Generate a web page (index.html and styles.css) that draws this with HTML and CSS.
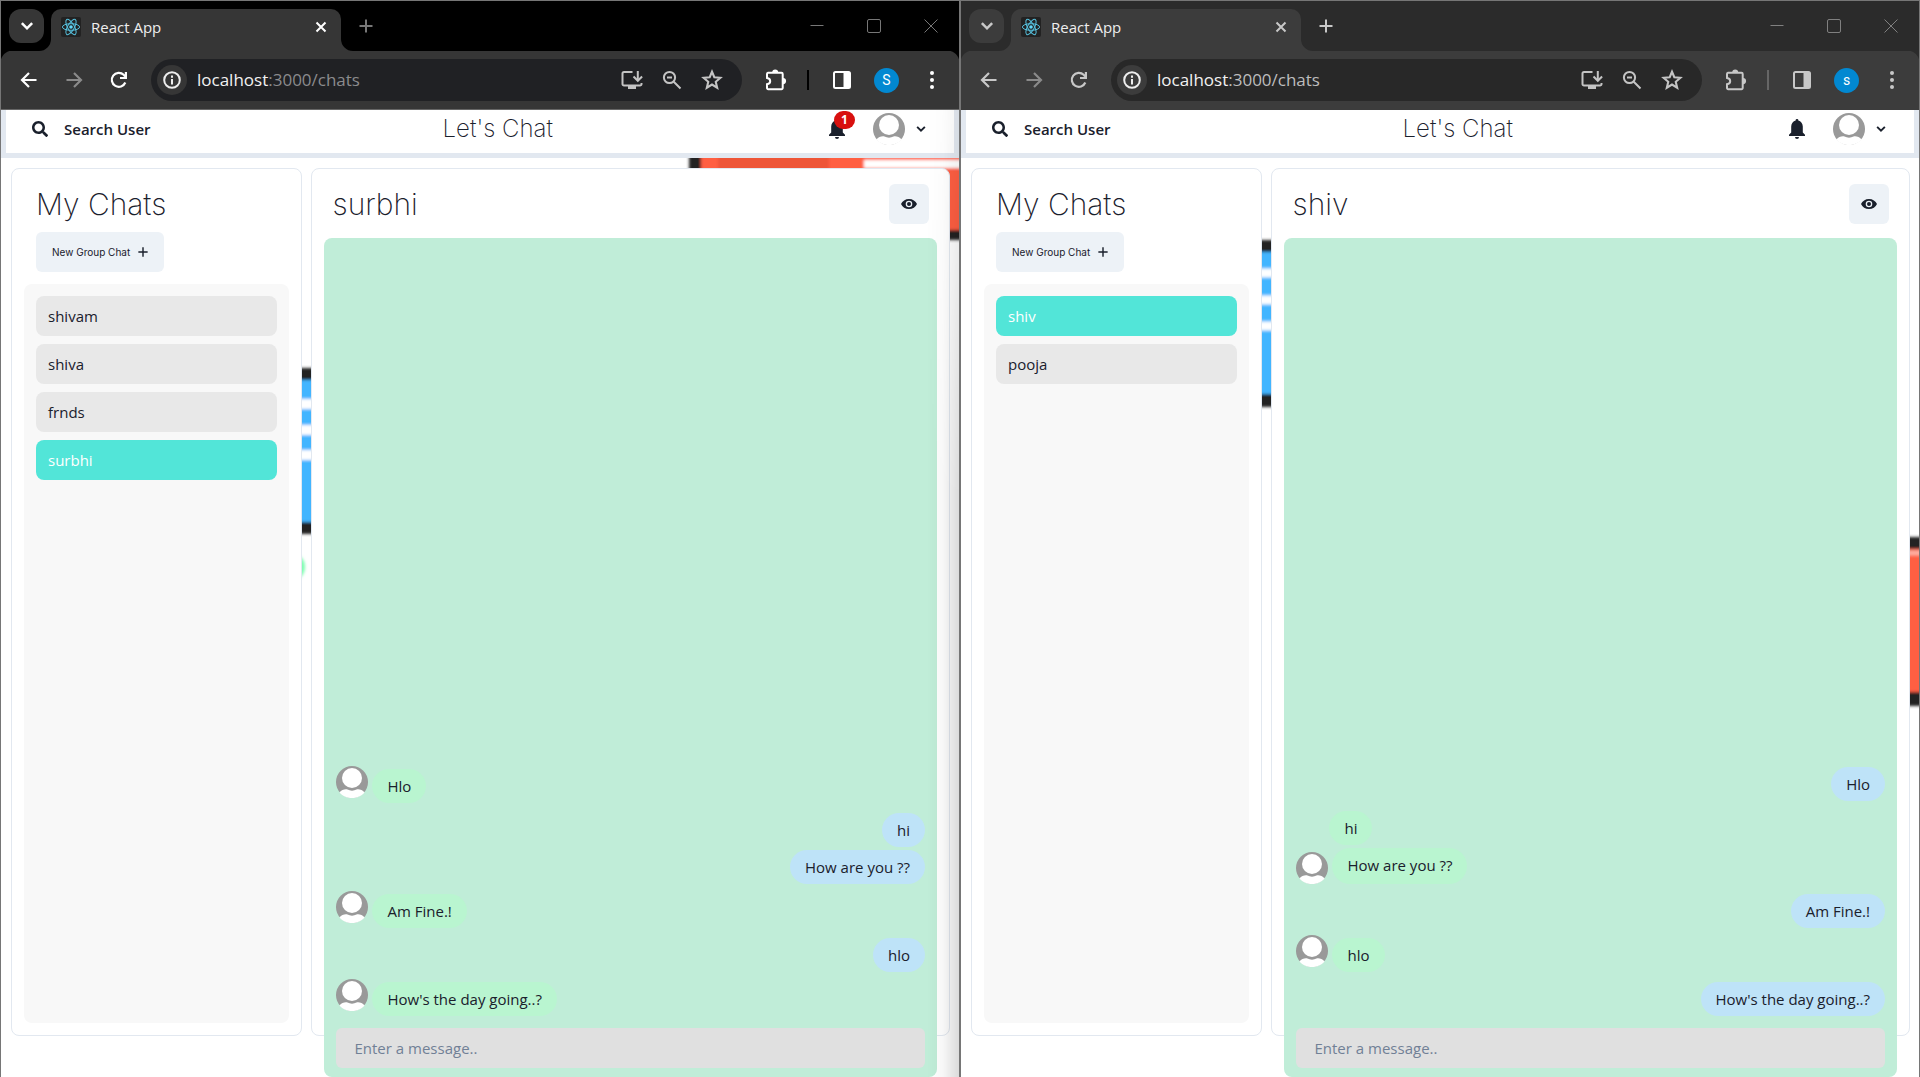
FILE: index.html
```html
<!DOCTYPE html>
<html lang="en">
<head>
<meta charset="utf-8">
<title>Let's Chat</title>
<meta name="viewport" content="width=device-width, initial-scale=1">
<link rel="stylesheet" href="styles.css">
</head>
<body>
<svg class="sprite" width="0" height="0" aria-hidden="true">
  <symbol id="i-react" viewBox="0 0 20 20"><rect width="20" height="20" rx="2" fill="#222"/><g fill="none" stroke="#56c1de" stroke-width="1"><ellipse cx="10" cy="10" rx="8.6" ry="3.3"/><ellipse cx="10" cy="10" rx="8.6" ry="3.3" transform="rotate(60 10 10)"/><ellipse cx="10" cy="10" rx="8.6" ry="3.3" transform="rotate(120 10 10)"/></g><circle cx="10" cy="10" r="1.8" fill="#61dafb"/></symbol>
  <symbol id="i-down" viewBox="0 0 14 14"><path d="M2.5 4.5 7 9l4.500-4.500" fill="none" stroke="currentColor" stroke-width="2.200"/></symbol>
  <symbol id="i-x" viewBox="0 0 14 14"><path d="m2.500 2.500 9 9m0-9-9 9" fill="none" stroke="currentColor" stroke-width="2"/></symbol>
  <symbol id="i-plus" viewBox="0 0 14 14"><path d="M7 .5v13M.5 7h13" fill="none" stroke="currentColor" stroke-width="2"/></symbol>
  <symbol id="i-min" viewBox="0 0 14 14"><path d="M.5 6.500h13" fill="none" stroke="currentColor"/></symbol>
  <symbol id="i-max" viewBox="0 0 14 14"><rect x=".5" y=".5" width="13" height="13" rx="1.500" fill="none" stroke="currentColor"/></symbol>
  <symbol id="i-close" viewBox="0 0 14 14"><path d="m.5.5 13 13m0-13-13 13" fill="none" stroke="currentColor"/></symbol>
  <symbol id="i-back" viewBox="0 0 20 20"><path d="M17.500 10H3.500M10 3l-7 7 7 7" fill="none" stroke="currentColor" stroke-width="2.200"/></symbol>
  <symbol id="i-fwd" viewBox="0 0 20 20"><path d="M2.500 10h14M10 3l7 7-7 7" fill="none" stroke="currentColor" stroke-width="2.200"/></symbol>
  <symbol id="i-reload" viewBox="0 0 20 20"><path d="M16.300 12.500a7 7 0 1 1-1.600-7.700l1.500 1.600" fill="none" stroke="currentColor" stroke-width="2.200"/><path d="M18 2v7h-7V7h4.800V2z" fill="currentColor"/></symbol>
  <symbol id="i-info" viewBox="0 0 20 20"><circle cx="10" cy="10" r="7.800" fill="none" stroke="currentColor" stroke-width="2"/><path d="M9 9h2v5.500H9zM9 5.500h2v2.200H9z" fill="currentColor"/></symbol>
  <symbol id="i-install" viewBox="0 0 22 20"><path d="M11.500 2H3a1.500 1.500 0 0 0-1.500 1.500V14A1.500 1.500 0 0 0 3 15.500h16a1.500 1.500 0 0 0 1.500-1.500v-1" fill="none" stroke="currentColor" stroke-width="2"/><path d="M7 15h8v4H7zM15.800 1h2v9h-2z" fill="currentColor"/><path d="m12.500 6.500 4.300 4.300 4.300-4.300" fill="none" stroke="currentColor" stroke-width="2"/></symbol>
  <symbol id="i-zoomout" viewBox="0 0 20 20"><circle cx="7.500" cy="7.500" r="5.600" fill="none" stroke="currentColor" stroke-width="2"/><path d="M5 7.500h5M11.500 11.500l7 7" fill="none" stroke="currentColor" stroke-width="2"/></symbol>
  <symbol id="i-star" viewBox="0 0 20 20"><path d="m10 2.500 2.100 5 5.500.5-4.200 3.600 1.300 5.400-4.700-2.900L5.300 17l1.300-5.400L2.400 8l5.500-.5z" fill="none" stroke="currentColor" stroke-width="1.900"/></symbol>
  <symbol id="i-puzzle" viewBox="0 0 22 22"><path d="M3 3.800h13.500a1.200 1.200 0 0 1 1.200 1.200v14a1.200 1.200 0 0 1-1.200 1.200H3.200A1.200 1.200 0 0 1 2 19v-3.800c2.200-.3 3.200-1.300 3.200-3S4.200 9.300 2 9V5a1.200 1.200 0 0 1 1-1.200z" fill="none" stroke="currentColor" stroke-width="2"/><path d="M7.200 3.500a3 3 0 0 1 6 0zM18 9a3 3 0 0 1 0 6.200z" fill="currentColor"/></symbol>
  <symbol id="i-panel" viewBox="0 0 20 20"><rect x="2" y="2" width="16" height="16" rx="1.500" fill="none" stroke="currentColor" stroke-width="2"/><path d="M11.500 2H18v16h-6.500z" fill="currentColor"/></symbol>
  <symbol id="i-dots" viewBox="0 0 20 20"><g fill="currentColor"><circle cx="10" cy="3" r="2"/><circle cx="10" cy="10" r="2"/><circle cx="10" cy="17" r="2"/></g></symbol>
  <symbol id="i-search" viewBox="0 0 512 512"><path fill="currentColor" d="M505 442.700L405.300 343c-4.500-4.500-10.600-7-17-7H372c27.600-35.300 44-79.700 44-128C416 93.100 322.900 0 208 0S0 93.100 0 208s93.100 208 208 208c48.300 0 92.700-16.400 128-44v16.300c0 6.400 2.500 12.500 7 17l99.700 99.700c9.400 9.400 24.600 9.400 33.900 0l28.300-28.300c9.400-9.400 9.400-24.600.1-34zM208 336c-70.700 0-128-57.200-128-128 0-70.700 57.200-128 128-128 70.700 0 128 57.200 128 128 0 70.700-57.200 128-128 128z"/></symbol>
  <symbol id="i-bell" viewBox="0 0 16 20"><path fill="currentColor" d="M8 0a1.300 1.300 0 0 1 1.300 1.500C12 2.200 13.800 4.500 13.800 7.500v6L16 15.800V17H0v-1.200l2.200-2.300v-6c0-3 1.800-5.300 4.500-6A1.300 1.300 0 0 1 8 0zM6 18h4a2 2 0 0 1-4 0z"/></symbol>
  <symbol id="i-eye" viewBox="0 0 16 12"><path fill="currentColor" fill-rule="evenodd" d="M8 1C4.400 1 1.300 3 0 6c1.300 3 4.400 5 8 5s6.700-2 8-5c-1.300-3-4.400-5-8-5zm0 8.300A3.300 3.300 0 1 1 8 2.700a3.300 3.300 0 0 1 0 6.600zM8 4a2 2 0 1 0 0 4 2 2 0 0 0 0-4z"/></symbol>
  <symbol id="i-user" viewBox="0 0 32 32"><circle cx="16" cy="16" r="16" fill="#999"/><circle cx="16" cy="12" r="10" fill="#fff"/><path d="M3.500 26.500c2-2.500 5.500-3.700 8-3 2.500 1.500 6.500 1.500 9 0 2.500-.7 6 .5 8 3-2.500 3.500-7.500 5.500-12.500 5.500s-10-2-12.500-5.500z" fill="#fff"/></symbol>
  <symbol id="i-flare" viewBox="0 0 12 12"><path d="M12 0v12H0A12 12 0 0 0 12 0z" fill="currentColor"/></symbol>
</svg>

<div class="desktop">
  <section class="window window-active">
    <div class="tabstrip">
      <button class="tab-search" aria-label="Search tabs"><svg width="16" height="16"><use href="#i-down"/></svg></button>
      <div class="tab">
        <svg class="flare flare-left" width="12" height="12"><use href="#i-flare"/></svg>
        <svg width="20" height="20"><use href="#i-react"/></svg>
        <span class="tab-title">React App</span>
        <button class="tab-close" aria-label="Close tab"><svg width="14" height="14"><use href="#i-x"/></svg></button>
        <svg class="flare flare-right" width="12" height="12"><use href="#i-flare"/></svg>
      </div>
      <button class="tab-new" aria-label="New tab"><svg width="14" height="14"><use href="#i-plus"/></svg></button>
      <div class="controls">
        <button aria-label="Minimize"><svg width="14" height="14"><use href="#i-min"/></svg></button>
        <button aria-label="Maximize"><svg width="14" height="14"><use href="#i-max"/></svg></button>
        <button aria-label="Close"><svg width="14" height="14"><use href="#i-close"/></svg></button>
      </div>
    </div>
    <div class="toolbar">
      <button aria-label="Back"><svg width="20" height="20"><use href="#i-back"/></svg></button>
      <button class="dim" aria-label="Forward"><svg width="20" height="20"><use href="#i-fwd"/></svg></button>
      <button aria-label="Reload"><svg width="20" height="20"><use href="#i-reload"/></svg></button>
      <div class="omnibox">
        <button class="site-info" aria-label="Site information"><svg width="20" height="20"><use href="#i-info"/></svg></button>
        <span class="url">localhost<span class="path">:3000/chats</span></span>
        <button aria-label="Install"><svg width="22" height="20"><use href="#i-install"/></svg></button>
        <button aria-label="Zoom"><svg width="20" height="20"><use href="#i-zoomout"/></svg></button>
        <button aria-label="Bookmark"><svg width="22" height="22"><use href="#i-star"/></svg></button>
      </div>
      <button aria-label="Extensions"><svg width="22" height="22"><use href="#i-puzzle"/></svg></button>
      <span class="divider"></span>
      <button aria-label="Side panel"><svg width="20" height="20"><use href="#i-panel"/></svg></button>
      <button aria-label="Profile"><span class="profile">S</span></button>
      <button aria-label="Menu"><svg width="20" height="20"><use href="#i-dots"/></svg></button>
    </div>
    <div class="app">
      <header class="header">
        <button class="search"><svg width="16" height="16"><use href="#i-search"/></svg>Search User</button>
        <h1>Let's Chat</h1>
        <div class="account">
          <button class="bell" aria-label="Notifications"><svg width="16" height="20"><use href="#i-bell"/></svg><span class="badge">1</span></button>
          <button class="me" aria-label="Account"><svg width="32" height="32"><use href="#i-user"/></svg><svg width="12" height="12"><use href="#i-down"/></svg></button>
        </div>
      </header>
      <main class="main">
        <svg class="art" viewBox="0 0 958 919" width="958" height="919" aria-hidden="true">
          <defs><filter id="soft"><feGaussianBlur stdDeviation="1.5"/></filter></defs>
          <g filter="url(#soft)">
            <rect x="688" y="-30" width="300" height="112" fill="#222"/>
            <rect x="700" y="-20" width="288" height="92" fill="#ff5f43"/>
            <rect x="717" y="-20" width="111" height="60" fill="#ee5439"/>
            <rect x="863" y="2" width="120" height="8" fill="#fff"/>
            <rect x="230" y="210" width="120" height="166" fill="#222"/>
            <rect x="240" y="222" width="100" height="142" fill="#43b5ff"/>
            <path d="M240 246h100M240 272h100M240 297h100" stroke="#fff" stroke-width="10"/>
            <circle cx="290" cy="409" r="14" fill="#7dfdb0"/>
          </g>
        </svg>
        <section class="panel chats">
          <h2>My Chats</h2>
          <button class="group">New Group Chat<svg width="10" height="10"><use href="#i-plus"/></svg></button>
          <div class="list">
            <button class="chat">shivam</button>
            <button class="chat">shiva</button>
            <button class="chat">frnds</button>
            <button class="chat selected">surbhi</button>
          </div>
        </section>
        <section class="panel conversation">
          <div class="title">
            <h2>surbhi</h2>
            <button class="eye" aria-label="View profile"><svg width="16" height="12"><use href="#i-eye"/></svg></button>
          </div>
          <div class="thread">
            <div class="messages">
              <div class="row"><svg width="32" height="32"><use href="#i-user"/></svg><p class="bubble">Hlo</p></div>
              <div class="row mine"><p class="bubble">hi</p></div>
              <div class="row mine follow"><p class="bubble">How are you ??</p></div>
              <div class="row"><svg width="32" height="32"><use href="#i-user"/></svg><p class="bubble">Am Fine.!</p></div>
              <div class="row mine"><p class="bubble">hlo</p></div>
              <div class="row"><svg width="32" height="32"><use href="#i-user"/></svg><p class="bubble">How's the day going..?</p></div>
            </div>
            <input class="compose" type="text" aria-label="Message" placeholder="Enter a message..">
          </div>
        </section>
      </main>
    </div>
  </section>

  <section class="window window-idle">
    <div class="tabstrip">
      <button class="tab-search" aria-label="Search tabs"><svg width="16" height="16"><use href="#i-down"/></svg></button>
      <div class="tab">
        <svg class="flare flare-left" width="12" height="12"><use href="#i-flare"/></svg>
        <svg width="20" height="20"><use href="#i-react"/></svg>
        <span class="tab-title">React App</span>
        <button class="tab-close" aria-label="Close tab"><svg width="14" height="14"><use href="#i-x"/></svg></button>
        <svg class="flare flare-right" width="12" height="12"><use href="#i-flare"/></svg>
      </div>
      <button class="tab-new" aria-label="New tab"><svg width="14" height="14"><use href="#i-plus"/></svg></button>
      <div class="controls">
        <button aria-label="Minimize"><svg width="14" height="14"><use href="#i-min"/></svg></button>
        <button aria-label="Maximize"><svg width="14" height="14"><use href="#i-max"/></svg></button>
        <button aria-label="Close"><svg width="14" height="14"><use href="#i-close"/></svg></button>
      </div>
    </div>
    <div class="toolbar">
      <button aria-label="Back"><svg width="20" height="20"><use href="#i-back"/></svg></button>
      <button class="dim" aria-label="Forward"><svg width="20" height="20"><use href="#i-fwd"/></svg></button>
      <button aria-label="Reload"><svg width="20" height="20"><use href="#i-reload"/></svg></button>
      <div class="omnibox">
        <button class="site-info" aria-label="Site information"><svg width="20" height="20"><use href="#i-info"/></svg></button>
        <span class="url">localhost<span class="path">:3000/chats</span></span>
        <button aria-label="Install"><svg width="22" height="20"><use href="#i-install"/></svg></button>
        <button aria-label="Zoom"><svg width="20" height="20"><use href="#i-zoomout"/></svg></button>
        <button aria-label="Bookmark"><svg width="22" height="22"><use href="#i-star"/></svg></button>
      </div>
      <button aria-label="Extensions"><svg width="22" height="22"><use href="#i-puzzle"/></svg></button>
      <span class="divider"></span>
      <button aria-label="Side panel"><svg width="20" height="20"><use href="#i-panel"/></svg></button>
      <button aria-label="Profile"><span class="profile">s</span></button>
      <button aria-label="Menu"><svg width="20" height="20"><use href="#i-dots"/></svg></button>
    </div>
    <div class="app">
      <header class="header">
        <button class="search"><svg width="16" height="16"><use href="#i-search"/></svg>Search User</button>
        <h1>Let's Chat</h1>
        <div class="account">
          <button class="bell" aria-label="Notifications"><svg width="16" height="20"><use href="#i-bell"/></svg></button>
          <button class="me" aria-label="Account"><svg width="32" height="32"><use href="#i-user"/></svg><svg width="12" height="12"><use href="#i-down"/></svg></button>
        </div>
      </header>
      <main class="main">
        <svg class="art" viewBox="0 0 958 919" width="958" height="919" aria-hidden="true">
          <g filter="url(#soft)">
            <rect x="230" y="82" width="120" height="167" fill="#222"/>
            <rect x="240" y="94" width="100" height="142" fill="#43b5ff"/>
            <path d="M240 115h100M240 142h100M240 168h100" stroke="#fff" stroke-width="9"/>
            <rect x="900" y="379" width="120" height="169" fill="#222"/>
            <rect x="910" y="391" width="120" height="143" fill="#ff5f43"/>
            <path d="M910 395h100" stroke="#fff" stroke-opacity=".5" stroke-width="5"/>
          </g>
        </svg>
        <section class="panel chats">
          <h2>My Chats</h2>
          <button class="group">New Group Chat<svg width="10" height="10"><use href="#i-plus"/></svg></button>
          <div class="list">
            <button class="chat selected">shiv</button>
            <button class="chat">pooja</button>
          </div>
        </section>
        <section class="panel conversation">
          <div class="title">
            <h2>shiv</h2>
            <button class="eye" aria-label="View profile"><svg width="16" height="12"><use href="#i-eye"/></svg></button>
          </div>
          <div class="thread">
            <div class="messages">
              <div class="row mine"><p class="bubble">Hlo</p></div>
              <div class="row indent"><p class="bubble">hi</p></div>
              <div class="row follow"><svg width="32" height="32"><use href="#i-user"/></svg><p class="bubble">How are you ??</p></div>
              <div class="row mine"><p class="bubble">Am Fine.!</p></div>
              <div class="row"><svg width="32" height="32"><use href="#i-user"/></svg><p class="bubble">hlo</p></div>
              <div class="row mine"><p class="bubble">How's the day going..?</p></div>
            </div>
            <input class="compose" type="text" aria-label="Message" placeholder="Enter a message..">
          </div>
        </section>
      </main>
    </div>
  </section>
</div>
</body>
</html>
```
FILE: styles.css
```css
* { box-sizing: border-box; }

body {
  margin: 0;
  font: 15px/24px "Open Sans", "Noto Sans", sans-serif;
  color: #1a202c;
  background: #fff;
}

h1, h2, p { margin: 0; font-weight: 300; }
svg { display: block; flex: none; }
.sprite { position: absolute; }

button {
  display: flex;
  align-items: center;
  justify-content: center;
  padding: 0;
  border: 0;
  background: none;
  color: inherit;
  font: inherit;
}

.desktop {
  display: grid;
  grid-template-columns: 1fr 1fr;
  min-height: 100vh;
}

.window {
  position: relative;
  display: flex;
  flex-direction: column;
  min-width: 0;
  border: 1px solid #767676;
  border-bottom: 0;
}

.window-active {
  --strip: #000;
  --bar: #363636;
  --box: #202124;
  --ink: #fff;
  --path: #8b8b8d;
  --faint: #777;
  --plus: #777;
  --rule: #000;
  --edge: #666;
}

.window-idle {
  --strip: #2b2b2b;
  --bar: #3c3c3c;
  --box: #282828;
  --ink: #c8c8c8;
  --path: #bdbdbd;
  --faint: #808080;
  --plus: #c8c8c8;
  --rule: #666;
  --edge: #3c3c3c;
}

/* shadow cast by the neighbouring window */
.window-active::after {
  content: "";
  position: absolute;
  top: 109px;
  right: 0;
  bottom: 0;
  width: 32px;
  background: linear-gradient(to right, transparent, rgba(0, 0, 0, .03) 50%, rgba(0, 0, 0, .14));
  -webkit-mask-image: linear-gradient(rgba(0, 0, 0, .3), #000 40%);
  mask-image: linear-gradient(rgba(0, 0, 0, .3), #000 40%);
  pointer-events: none;
}

/* browser chrome */
.tabstrip {
  display: flex;
  align-items: flex-end;
  height: 50px;
  padding-left: 8px;
  background: var(--strip);
  color: var(--ink);
}

.tab-search {
  width: 35px;
  height: 34px;
  margin: 0 7px 8px 0;
  border-radius: 12px;
  background: var(--bar);
}

.tab {
  position: relative;
  display: flex;
  align-items: center;
  width: 290px;
  height: 42px;
  padding: 0 8px 6px 10px;
  border-radius: 10px 10px 0 0;
  background: var(--bar);
}

.tab-title { flex: 1; padding-left: 10px; color: #eee; }
.tab-close { width: 24px; height: 24px; }
.flare { position: absolute; bottom: 0; color: var(--bar); }
.flare-left { left: -12px; }
.flare-right { right: -12px; transform: scaleX(-1); }
.tab-new { width: 32px; height: 50px; margin-left: 9px; color: var(--plus); }
.controls { display: flex; margin-left: auto; color: var(--faint); }
.controls button { width: 57px; height: 50px; }

.toolbar {
  display: flex;
  align-items: center;
  height: 59px;
  padding: 0 5px;
  border-bottom: 1px solid var(--edge);
  background:
    linear-gradient(var(--bar), var(--bar)) 0 12px no-repeat,
    radial-gradient(circle at 12px 12px, var(--bar) 12px, var(--strip) 13px) 0 0 / 12px 12px no-repeat,
    radial-gradient(circle at 0 12px, var(--bar) 12px, var(--strip) 13px) 100% 0 / 12px 12px no-repeat,
    var(--bar);
  color: var(--ink);
}

.toolbar > button { width: 45px; height: 40px; }
.toolbar .dim { color: #8a8a8a; }

.omnibox {
  display: flex;
  align-items: center;
  flex: 1;
  height: 42px;
  margin: 0 11px 0 10px;
  padding: 0 10px 0 6px;
  border-radius: 21px;
  background: var(--box);
}

.omnibox button { width: 40px; height: 32px; color: #c4c4c4; }
.omnibox .site-info { width: 30px; height: 30px; border-radius: 50%; background: var(--bar); color: #eee; }
.url { flex: 1; padding-left: 10px; color: #f2f2f2; font-size: 17px; }
.path { color: var(--path); }
.divider { width: 2px; height: 20px; margin: 0 10px 0 9px; background: var(--rule); }

.profile {
  width: 25px;
  height: 25px;
  border-radius: 50%;
  background: #0288d1;
  color: #fff;
  font: 14px/25px Roboto, sans-serif;
}

/* application */
.app { display: flex; flex-direction: column; flex: 1; }

.header {
  display: flex;
  align-items: center;
  justify-content: space-between;
  height: 48px;
  padding: 0 19px 6px 10px;
  border: 5px solid #e2e8f0;
  border-top: 0;
  background: #fff;
}

.header h1 { font: 200 24px/32px Inter, sans-serif; }
.search { gap: 16px; padding: 0 16px; font-weight: 600; }
.account { display: flex; align-items: center; gap: 28px; }
.bell { position: relative; }

.badge {
  position: absolute;
  top: -8px;
  left: 5px;
  width: 21px;
  height: 18px;
  border-radius: 9px;
  background: #d8100f;
  color: #fff;
  font: 700 12px/18px "Open Sans", sans-serif;
}

.me { gap: 10px; padding-right: 8px; }

.main {
  position: relative;
  display: flex;
  justify-content: space-between;
  align-items: flex-start;
  flex: 1;
  padding: 10px 9px 0 10px;
  overflow: hidden;
}

.art { position: absolute; top: 0; left: 0; }

.panel {
  position: relative;
  display: flex;
  flex-direction: column;
  height: calc(100vh - 209px);
  padding: 12px;
  border: 1px solid #e2e8f0;
  border-radius: 8px;
  background: #fff;
}

.chats { width: 31%; }
.conversation { width: 68%; }
.panel h2 { font: 200 30px/46px Inter, sans-serif; }
.chats h2 { padding-left: 12px; }

.group {
  align-self: flex-start;
  gap: 8px;
  height: 40px;
  margin: 5px 12px 12px;
  padding: 0 16px;
  border-radius: 6px;
  background: #edf2f7;
  font: 10px/16px Inter, sans-serif;
}

.list {
  display: flex;
  flex-direction: column;
  flex: 1;
  gap: 8px;
  padding: 12px;
  border-radius: 8px;
  background: #f8f8f8;
}

.chat {
  justify-content: flex-start;
  height: 40px;
  padding: 0 12px;
  border-radius: 8px;
  background: #e8e8e8;
}

.chat.selected { background: #52e5d8; color: #fff; }

.title {
  display: flex;
  align-items: center;
  justify-content: space-between;
  padding: 0 8px 11px;
}

.eye { width: 40px; height: 40px; border-radius: 6px; background: #edf2f7; }

.thread {
  display: flex;
  flex-direction: column;
  flex: none;
  height: calc(100vh - 238px);
  padding: 12px 12px 9px;
  border-radius: 8px;
  background: #c0edd8;
}

.messages {
  display: flex;
  flex-direction: column;
  justify-content: flex-end;
  flex: 1;
}

.row { display: flex; gap: 4px; margin-top: 10px; }
.row svg { margin: -3px 0 0; height: 32px; }
.row.mine { justify-content: flex-end; }
.row.indent { padding-left: 33px; }
.row.follow { margin-top: 3px; }
.row.follow svg { margin-top: 4px; }

.bubble {
  padding: 5px 15px;
  border-radius: 20px;
  background: #b9f5d0;
  font-weight: 400;
}

.mine .bubble { background: #bee3f8; }

.compose {
  height: 40px;
  margin-top: 12px;
  padding: 0 18px;
  border: 0;
  border-radius: 6px;
  background: #e0e0e0;
  color: inherit;
  font: inherit;
}

.compose::placeholder { color: #718096; opacity: 1; }
```
